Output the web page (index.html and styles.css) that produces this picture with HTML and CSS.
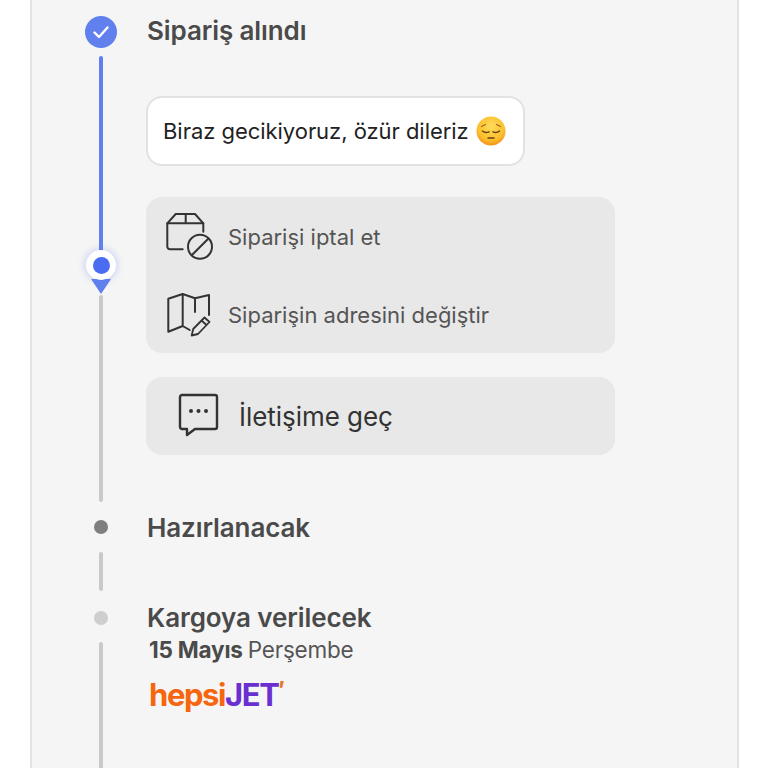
FILE: index.html
```html
<!DOCTYPE html>
<html lang="tr">
<head>
<meta charset="utf-8">
<title>Sipariş takibi</title>
<link rel="stylesheet" href="styles.css">
</head>
<body>
<main class="panel">
  <div class="rail">
    <span class="done-mark">
      <svg width="32" height="32" viewBox="0 0 32 32"><path d="M9.500 16.500l4.500 4.500 8.500-9.500" fill="none" stroke="#fff" stroke-width="2.400" stroke-linecap="round" stroke-linejoin="round"/></svg>
    </span>
    <span class="seg seg-blue"></span>
    <span class="here">
      <span class="here-ring"><span class="here-dot"></span></span>
      <span class="here-tip"></span>
    </span>
    <span class="seg seg-long"></span>
    <span class="dot dot-dark"></span>
    <span class="seg seg-short"></span>
    <span class="dot dot-light"></span>
    <span class="seg seg-end"></span>
  </div>
  <div class="content">
    <h2 class="title title-first">Sipariş alındı</h2>
    <div class="bubble">
      <span>Biraz gecikiyoruz, özür dileriz</span>
      <svg class="emoji" width="30" height="30" viewBox="0 0 30 30">
        <defs><radialGradient id="face" cx="50%" cy="35%" r="65%"><stop offset="0" stop-color="#fddc5c"/><stop offset="0.7" stop-color="#fbc02d"/><stop offset="1" stop-color="#f0921a"/></radialGradient></defs>
        <circle cx="15" cy="15" r="14.500" fill="url(#face)"/>
        <path d="M5.500 10.500l4-2M24.500 10.500l-4-2" stroke="#a8641a" stroke-width="1.200" stroke-linecap="round" fill="none"/>
        <path d="M6.500 15q3 2.600 6.500 .8M23.500 15q-3 2.600-6.500 .8" stroke="#6b3d12" stroke-width="1.500" stroke-linecap="round" fill="none"/>
        <path d="M12 22h6" stroke="#6b3d12" stroke-width="1.500" stroke-linecap="round"/>
      </svg>
    </div>
    <section class="card actions">
      <div class="action">
        <svg class="icon" width="50" height="50" viewBox="0 0 50 50" fill="none" stroke="#333" stroke-width="2" stroke-linejoin="round" stroke-linecap="round">
          <path d="M18.700 38.300H6a2.700 2.700 0 0 1-2.700-2.700V12.300L11.700 3H31l8.300 9.300v8.400"/>
          <path d="M3.300 12.300h36M21.700 3v9.300"/>
          <circle cx="36" cy="35.700" r="12"/>
          <path d="M28.700 43.300L44 28"/>
        </svg>
        <span class="action-label">Siparişi iptal et</span>
      </div>
      <div class="action">
        <svg class="icon" width="50" height="50" viewBox="0 0 50 50" fill="none" stroke="#333" stroke-width="2" stroke-linejoin="round" stroke-linecap="round">
          <path d="M31 9.300L45 6v20M31 9.300V23M18.700 5V37M4.300 9.800L18.700 5 31 9.300M4.300 9.800v33L18.700 37l7 4"/>
          <path d="M27.700 46.500l1.500-6.500L40.500 28.500l5 4.500L34 45zM37.500 31.500l5 4.500" stroke-width="1.800"/>
        </svg>
        <span class="action-label">Siparişin adresini değiştir</span>
      </div>
    </section>
    <button class="card contact" type="button">
      <svg width="42" height="44" viewBox="0 0 42 44" fill="none" stroke="#333" stroke-width="2.400" stroke-linejoin="round">
        <path d="M4 2h33a2 2 0 0 1 2 2v30a2 2 0 0 1-2 2H17l-8 6v-6H4a2 2 0 0 1-2-2V4a2 2 0 0 1 2-2z"/>
        <circle cx="13" cy="18" r="2" fill="#333" stroke="none"/><circle cx="20.500" cy="18" r="2" fill="#333" stroke="none"/><circle cx="28" cy="18" r="2" fill="#333" stroke="none"/>
      </svg>
      <span>İletişime geç</span>
    </button>
    <h2 class="title title-prep">Hazırlanacak</h2>
    <h2 class="title title-ship">Kargoya verilecek</h2>
    <p class="date"><b>15 Mayıs</b><span class="date-day">Perşembe</span></p>
    <div class="logo"><span class="hepsi">hepsi</span><span class="jet">JET</span><span class="tick">′</span></div>
  </div>
</main>
</body>
</html>
```
FILE: styles.css
```css
* { box-sizing: border-box; }
html, body { margin: 0; height: 768px; overflow: hidden; background: #fff; }
body { font-family: Inter, "Liberation Sans", sans-serif; }
.panel {
  margin-left: 30px;
  width: 709px;
  height: 768px;
  background: #f5f5f5;
  border-left: 2px solid #e2e2e2;
  border-right: 2px solid #e2e2e2;
  display: flex;
  padding-left: 53px;
}
.rail {
  width: 32px;
  height: 768px;
  padding-top: 16px;
  display: flex;
  flex-direction: column;
  align-items: center;
  flex: none;
}
.done-mark { width: 32px; height: 32px; border-radius: 50%; background: #6180ee; display: block; flex: none; }
.done-mark svg { display: block; }
.seg { display: block; width: 4px; border-radius: 2px; background: #c9c9c9; flex: none; }
.seg-blue { height: 197px; margin-top: 8px; background: #6180ee; }
.here { display: flex; flex-direction: column; align-items: center; margin-top: -3px; flex: none; }
.here-ring {
  width: 30px; height: 30px; border-radius: 50%;
  background: #fff;
  box-shadow: 0 0 6px 2px rgba(97,128,238,.25);
  display: flex; align-items: center; justify-content: center;
  position: relative;
}
.here-dot { width: 17px; height: 17px; border-radius: 50%; background: #4a6cf0; }
.here-tip {
  width: 0; height: 0;
  margin-top: -1px;
  border-left: 10px solid transparent;
  border-right: 10px solid transparent;
  border-top: 15px solid #6180ee;
}
.seg-long { height: 207px; margin-top: 1px; }
.dot { display: block; width: 14px; height: 14px; border-radius: 50%; flex: none; }
.dot-dark { margin-top: 18px; background: #7f7f7f; }
.seg-short { height: 39px; margin-top: 18px; }
.dot-light { margin-top: 20px; background: #cecece; }
.seg-end { height: 130px; margin-top: 17px; }

.content { margin-left: 29px; width: 469px; flex: none; }
.title {
  margin: 0;
  font-size: 26px;
  line-height: 32px;
  font-weight: 600;
  letter-spacing: -0.1px;
  color: #4a4a4a;
}
.title-first { margin: 15px 0 0 1px; }
.bubble {
  margin-top: 49px;
  width: 379px;
  height: 70px;
  padding: 0 17px 0 15px;
  background: #fff;
  border: 2px solid #e2e2e2;
  border-radius: 16px;
  display: flex;
  align-items: center;
  justify-content: space-between;
  font-size: 22px;
  letter-spacing: -0.04px;
  color: #222;
  white-space: nowrap;
}
.emoji { flex: none; }
.card { background: #e8e8e8; border-radius: 16px; display: flex; }
.actions {
  margin-top: 31px;
  height: 156px;
  flex-direction: column;
  padding: 14px 0 0 18px;
  gap: 28px;
}
.action {
  display: flex;
  align-items: center;
  gap: 14px;
  height: 50px;
  font-size: 22px;
  color: #555;
}
.action-label { padding-top: 1px; }
.icon { flex: none; display: block; overflow: visible; }
.contact {
  margin-top: 24px;
  width: 469px;
  height: 78px;
  border: 0;
  padding: 0 0 0 32px;
  align-items: center;
  gap: 19px;
  font-family: inherit;
  font-size: 26px;
  letter-spacing: -0.05px;
  color: #333;
  text-align: left;
}
.contact svg { flex: none; display: block; margin-top: -3px; }
.title-prep { margin: 57px 0 0 1px; }
.title-ship { margin: 58px 0 0 1px; }
.date { margin: 1px 0 0 3px; font-size: 22.500px; line-height: 30px; color: #555; letter-spacing: -0.2px; }
.date b { font-weight: 700; color: #4a4a4a; }
.date-day { margin-left: 5px; }
.logo {
  margin: 12px 0 0 3px;
  display: flex;
  font-size: 31px;
  line-height: 36px;
  font-weight: 700;
  letter-spacing: -1.4px;
}
.hepsi { color: #f5660f; }
.jet { color: #6a2fd0; }
.tick { color: #e8771f; font-size: 24px; line-height: 28px; font-weight: 700; }
```
